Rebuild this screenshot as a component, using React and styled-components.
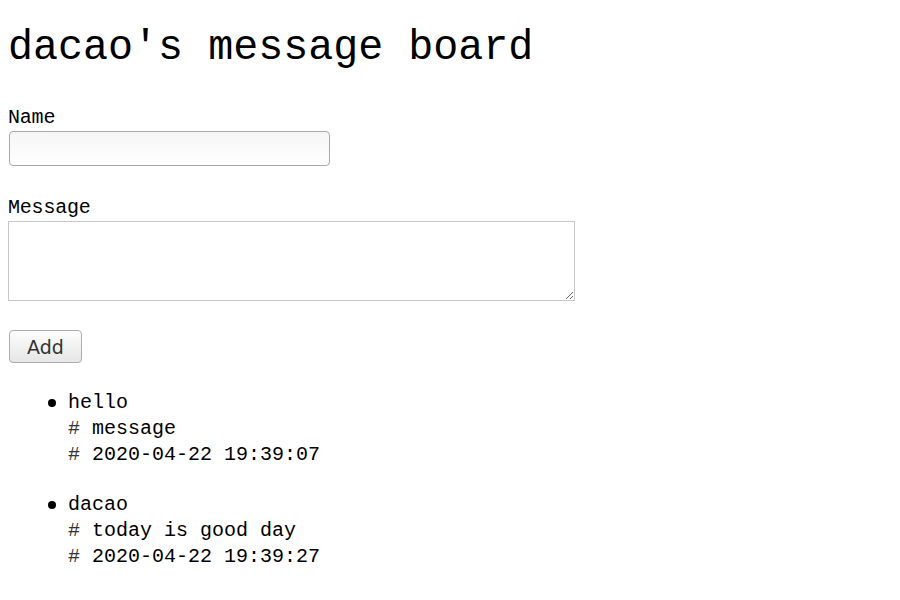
import React, { useState } from "react";
import styled, { createGlobalStyle } from "styled-components";

const GlobalStyle = createGlobalStyle`
  body {
    margin: 8px;
    background: #fff;
    color: #000;
    font-family: "Liberation Mono", "DejaVu Sans Mono", monospace;
  }
`;

const initialMessages = [
  { name: "hello", text: "message", time: "2020-04-22 19:39:07" },
  { name: "dacao", text: "today is good day", time: "2020-04-22 19:39:27" },
];

const MessageBoard = () => {
  const [name, setName] = useState("");
  const [text, setText] = useState("");
  const [messages] = useState(initialMessages);

  return (
    <Container>
      <GlobalStyle />
      <Title>dacao's message board</Title>
      <Form onSubmit={(e) => e.preventDefault()}>
        <Field $space={31}>
          <Label htmlFor="name">Name</Label>
          <Input id="name" value={name} onChange={(e) => setName(e.target.value)} />
        </Field>
        <Field $space={29}>
          <Label htmlFor="message">Message</Label>
          <TextArea id="message" value={text} onChange={(e) => setText(e.target.value)} />
        </Field>
        <Button type="submit">Add</Button>
      </Form>
      <List>
        {messages.map((m) => (
          <Item key={m.time}>
            <Line>{m.name}</Line>
            <Line>
              <Hash>#</Hash> {m.text}
            </Line>
            <Line>
              <Hash>#</Hash> {m.time}
            </Line>
          </Item>
        ))}
      </List>
    </Container>
  );
};

const Container = styled.div`
  display: flex;
  flex-direction: column;
`;

const Title = styled.h1`
  font-family: "Liberation Mono", monospace;
  font-size: 41.7px;
  font-weight: normal;
  line-height: 48px;
  margin: 16px 0 35px;
`;

const Form = styled.form`
  display: flex;
  flex-direction: column;
  align-items: flex-start;
`;

const Field = styled.div`
  display: flex;
  flex-direction: column;
  align-items: flex-start;
  margin-bottom: ${(p) => p.$space}px;
`;

const Label = styled.label`
  font-family: "Liberation Mono", monospace;
  font-size: 20px;
  line-height: 22px;
  margin-bottom: 2px;
  letter-spacing: -0.2px;
`;

const Input = styled.input`
  box-sizing: border-box;
  width: 321px;
  height: 35px;
  margin: 0 0 0 1px;
  padding: 4px 6px;
  border: 1px solid #a9a9a9;
  border-radius: 4px;
  background: linear-gradient(#f5f5f5, #ffffff);
  font-size: 16px;
  outline: none;
`;

const TextArea = styled.textarea`
  box-sizing: border-box;
  width: 567px;
  height: 80px;
  margin: 0;
  padding: 4px;
  border: 1px solid #c8c8c8;
  border-radius: 0;
  background: #fff;
  font-size: 16px;
  outline: none;
`;

const Button = styled.button`
  box-sizing: border-box;
  width: 73px;
  height: 33px;
  margin: 0 0 0 1px;
  padding: 0;
  border: 1px solid #adadad;
  border-radius: 4px;
  background: linear-gradient(#fdfdfd, #e6e6e6);
  color: #333;
  font-family: "DejaVu Sans", "Open Sans", sans-serif;
  font-size: 19px;
  cursor: pointer;
`;

const List = styled.ul`
  margin: 27px 0 0;
  padding-left: 60px;
  list-style: none;
`;

const Item = styled.li`
  position: relative;
  font-family: "Liberation Mono", monospace;
  font-size: 20px;
  line-height: 26px;
  margin-bottom: 24px;

  &::before {
    content: "";
    position: absolute;
    left: -20px;
    top: 9px;
    width: 8px;
    height: 8px;
    border-radius: 50%;
    background: #000;
  }
`;

const Line = styled.div``;

const Hash = styled.span`
  color: #333;
`;

export default MessageBoard;
